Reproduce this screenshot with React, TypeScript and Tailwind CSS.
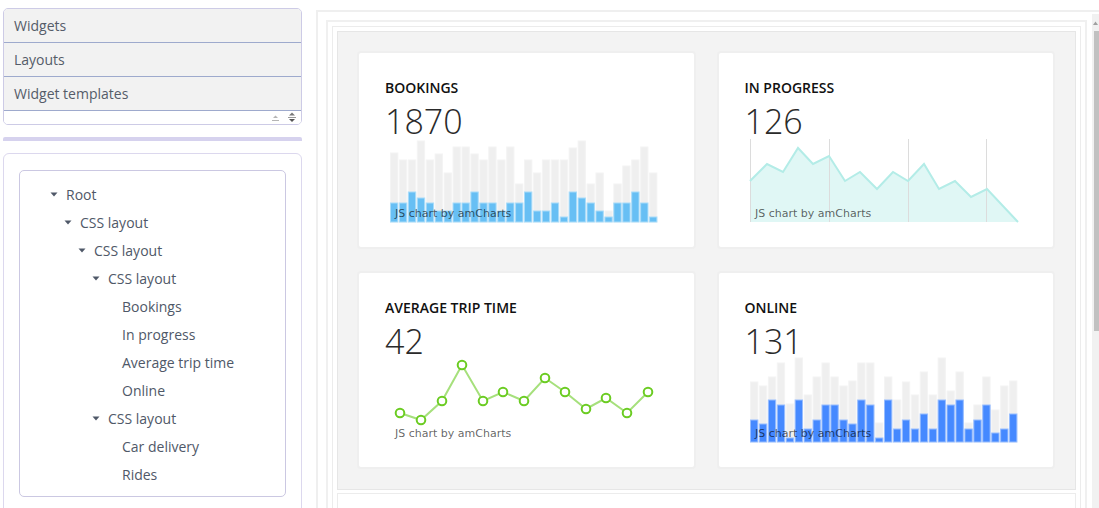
import React from 'react';

const treeItems = [
  { label: 'Root', level: 0, open: true },
  { label: 'CSS layout', level: 1, open: true },
  { label: 'CSS layout', level: 2, open: true },
  { label: 'CSS layout', level: 3, open: true },
  { label: 'Bookings', level: 4, open: false },
  { label: 'In progress', level: 4, open: false },
  { label: 'Average trip time', level: 4, open: false },
  { label: 'Online', level: 4, open: false },
  { label: 'CSS layout', level: 3, open: true },
  { label: 'Car delivery', level: 4, open: false },
  { label: 'Rides', level: 4, open: false },
];

const indent = ['pl-[30px]', 'pl-[44px]', 'pl-[58px]', 'pl-[72px]', 'pl-[86px]'];

const bookingsGray = [13, 20, 20, 1, 20, 14, 33, 7, 7, 14, 20, 7, 20, 7, 44, 20, 33, 20, 20, 20, 8, 1, 44, 33, 71, 44, 26, 20, 7, 33];
const bookingsBlue = [63, 63, 52, 58, 63, 71, 71, 63, 63, 52, 63, 63, 71, 63, 63, 52, 71, 71, 63, 77, 52, 58, 63, 71, 77, 63, 63, 52, 63, 77];

const onlineGray = [22, 26, 17, 3, 44, -2, 35, 17, 3, 17, 26, 21, 3, 3, 63, 17, 40, 22, 35, 12, 35, -2, 31, 12, 63, 45, 17, 50, 26, 21];
const onlineBlue = [60, 64, 40, 45, 78, 40, 69, 60, 45, 45, 60, 64, 40, 45, 78, 40, 69, 60, 69, 54, 69, 40, 45, 40, 69, 60, 45, 73, 69, 54];

const areaPts: [number, number][] = [
  [0, 41], [17, 24], [33, 32], [48, 8], [63, 24], [79, 16], [95, 41], [110, 32], [127, 49],
  [143, 32], [158, 41], [174, 24], [189, 49], [205, 41], [221, 57], [237, 49], [268, 82],
];

const linePts: [number, number][] = [
  [10, 53], [31, 60], [52, 41], [72, 5], [93, 41], [113, 32], [134, 41], [155, 18], [175, 32],
  [196, 49], [216, 38], [237, 53], [258, 32],
];

const Credit = () => (
  <text x={5} y={77} fontSize={11} fill="#000" fillOpacity={0.62} fontFamily="'DejaVu Sans', Verdana, sans-serif">
    JS chart by amCharts
  </text>
);

const BarChart = ({ gray, blue, fill, stroke }: { gray: number[]; blue: number[]; fill: string; stroke: string }) => {
  const pitch = 268 / 30;
  return (
    <svg width={268} height={82} className="block overflow-visible">
      {gray.map((g, i) => (
        <rect key={'g' + i} x={i * pitch + 0.5} y={g} width={pitch - 1.6} height={82 - g} fill="#efefef" stroke="#f4f4f4" strokeWidth={1} />
      ))}
      {blue.map((b, i) => (
        <rect key={'b' + i} x={i * pitch + 0.5} y={b} width={pitch - 1.6} height={82 - b} fill={fill} stroke={stroke} strokeWidth={1} />
      ))}
      <Credit />
    </svg>
  );
};

const AreaChart = () => {
  const line = areaPts.map(([x, y]) => `${x},${y}`).join(' ');
  return (
    <svg width={268} height={82} className="block overflow-visible">
      <polygon points={`0,82 ${line} 268,82`} fill="#e0f7f5" />
      {[0, 79, 158, 236].map((x) => (
        <line key={x} x1={x + 0.5} y1={-1} x2={x + 0.5} y2={82} stroke="#dcdcdc" strokeWidth={1} />
      ))}
      <polyline points={line} fill="none" stroke="#b3ece7" strokeWidth={2} />
      <Credit />
    </svg>
  );
};

const LineChart = () => (
  <svg width={268} height={82} className="block overflow-visible">
    <polyline points={linePts.map(([x, y]) => `${x},${y}`).join(' ')} fill="none" stroke="#a6e07c" strokeWidth={2} />
    {linePts.map(([x, y], i) => (
      <circle key={i} cx={x} cy={y} r={4.3} fill="#fff" stroke="#6bcc22" strokeWidth={2} />
    ))}
    <Credit />
  </svg>
);

const Card = ({ title, value, children }: { title: string; value: string; children: React.ReactNode }) => (
  <div className="h-[198px] rounded-[4px] border-2 border-[#efefef] bg-white pl-[26px] pt-[24px]">
    <div className="h-[22px] text-[14px] font-semibold leading-[22px] text-[#111]">{title}</div>
    <div className="h-[41px] text-[34px] font-light leading-[45px] text-[#2a2a2a]">{value}</div>
    <div className="ml-[5px]">{children}</div>
  </div>
);

const Caret = () => (
  <svg width={8} height={5} viewBox="0 0 8 5" className="mr-[8px] shrink-0">
    <path d="M0.5 0.5 L7.5 0.5 L4 4.5 Z" fill="#4f5868" />
  </svg>
);

export default function App() {
  return (
    <div className="flex h-[508px] w-[1099px] overflow-hidden bg-white font-['Open_Sans',sans-serif]">
      {/* left side panel */}
      <div className="w-[316px] shrink-0 pl-[3px] pr-[14px] pt-[8px]">
        <div className="overflow-hidden rounded-[5px] border border-[#cdcbe6]">
          {['Widgets', 'Layouts', 'Widget templates'].map((t) => (
            <div key={t} className="flex h-[34px] items-center border-b border-[#9eaacd] bg-[#f2f2f2] pl-[10px] text-[14px] text-[#555c69]">
              {t}
            </div>
          ))}
          <div className="flex h-[13px] items-center justify-end gap-[7px] bg-white pr-[4px]">
            <svg width={9} height={8} viewBox="0 0 9 8">
              <path d="M2 4 L4.5 1.5 L7 4 Z" fill="#b5b5b5" />
              <rect x={1} y={6} width={7} height={1} fill="#b5b5b5" />
            </svg>
            <svg width={10} height={11} viewBox="0 0 10 11">
              <path d="M2 3.5 L5 0.5 L8 3.5 Z" fill="#777" />
              <rect x={1} y={5} width={8} height={1} fill="#999" />
              <path d="M2 7 L5 10 L8 7 Z" fill="#555" />
            </svg>
          </div>
        </div>
        <div className="mt-[12px] h-[4px] rounded-t-[2px] bg-[#d6d2ee]" />
        <div className="mt-[12px] h-[400px] rounded-[6px] border border-[#dcd8ee] px-[15px] pt-[16px]">
          <div className="h-[327px] rounded-[5px] border border-[#cbc8e2] pt-[9px]">
            {treeItems.map((item, i) => (
              <div key={i} className={`flex h-[28px] items-center text-[14px] text-[#4f5868] ${indent[item.level]}`}>
                {item.open ? <Caret /> : <span className="w-[16px] shrink-0" />}
                {item.label}
              </div>
            ))}
          </div>
        </div>
      </div>

      {/* dashboard area */}
      <div className="mt-[10px] flex flex-1 border-l-2 border-t-2 border-[#efefef] pl-[8px] pt-[2px]">
        <div className="mr-[5px] mt-[6px] flex-1 border-x-2 border-t-2 border-[#f0f0f0] p-[4px]">
          <div className="border border-[#ececec] p-[4px]">
            <div className="grid grid-cols-2 gap-x-[21px] gap-y-[22px] border border-[#e6e6e6] bg-[#f3f3f3] pb-[20px] pl-[19px] pr-[20px] pt-[19px]">
              <Card title="BOOKINGS" value="1870">
                <BarChart gray={bookingsGray} blue={bookingsBlue} fill="#67bff4" stroke="#a8dcfa" />
              </Card>
              <Card title="IN PROGRESS" value="126">
                <AreaChart />
              </Card>
              <Card title="AVERAGE TRIP TIME" value="42">
                <LineChart />
              </Card>
              <Card title="ONLINE" value="131">
                <BarChart gray={onlineGray} blue={onlineBlue} fill="#4589ff" stroke="#97bdff" />
              </Card>
            </div>
            <div className="mt-[3px] h-[60px] border border-[#ececec] bg-white" />
          </div>
        </div>
        <div className="flex w-[7px] flex-col bg-[#f1f1f1]">
          <div className="flex h-[17px] items-center justify-end pr-[1px]">
            <svg width={5} height={4} viewBox="0 0 5 4">
              <path d="M0 4 L2.5 0.5 L5 4 Z" fill="#a0a0a0" />
            </svg>
          </div>
          <div className="ml-[2px] h-[300px] bg-[#c1c1c1]" />
        </div>
      </div>
    </div>
  );
}
